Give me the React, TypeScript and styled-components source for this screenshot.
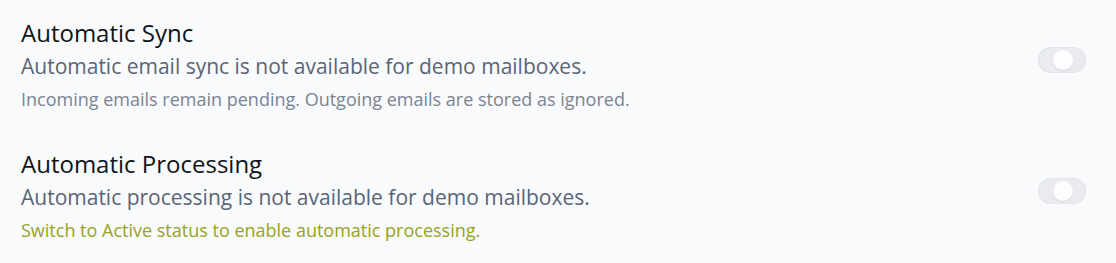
import React from "react";
import styled, { createGlobalStyle } from "styled-components";

const Global = createGlobalStyle`
  html, body { margin: 0; padding: 0; background: #f8fafb; }
  body { font-family: "Open Sans", "Noto Sans", sans-serif; }
`;

const Page = styled.div`
  display: flex;
  flex-direction: column;
  gap: 36px;
  padding: 17px 30px 0 21px;
`;

const Row = styled.div`
  display: flex;
  align-items: center;
  justify-content: space-between;
`;

const Texts = styled.div`
  display: flex;
  flex-direction: column;
`;

const Title = styled.div`
  font-size: 24px;
  line-height: 32px;
  color: #111418;
`;

const Desc = styled.div`
  font-size: 21px;
  line-height: 30px;
  margin-top: 2px;
  color: #5b6477;
`;

const Note = styled.div<{ $tone?: "muted" | "accent" }>`
  font-size: 18px;
  line-height: 26px;
  margin-top: 5px;
  color: ${(p) => (p.$tone === "accent" ? "#9aa21c" : "#7b8394")};
`;

const Track = styled.div`
  position: relative;
  width: 48px;
  height: 26px;
  border-radius: 13px;
  background: #e9ebee;
  box-shadow: inset 0 0 0 1px #e2e5e9;
  margin-bottom: 9px;
  flex-shrink: 0;
`;

const Knob = styled.div`
  position: absolute;
  left: 15px;
  top: 3px;
  width: 20px;
  height: 20px;
  border-radius: 50%;
  background: #fcfdfe;
  box-shadow: 0 1px 2px rgba(0, 0, 0, 0.08);
`;

const Toggle = () => (
  <Track>
    <Knob />
  </Track>
);

export default function App() {
  return (
    <>
      <Global />
      <Page>
        <Row>
          <Texts>
            <Title>Automatic Sync</Title>
            <Desc>Automatic email sync is not available for demo mailboxes.</Desc>
            <Note>Incoming emails remain pending. Outgoing emails are stored as ignored.</Note>
          </Texts>
          <Toggle />
        </Row>
        <Row>
          <Texts>
            <Title>Automatic Processing</Title>
            <Desc>Automatic processing is not available for demo mailboxes.</Desc>
            <Note $tone="accent">Switch to Active status to enable automatic processing.</Note>
          </Texts>
          <Toggle />
        </Row>
      </Page>
    </>
  );
}
